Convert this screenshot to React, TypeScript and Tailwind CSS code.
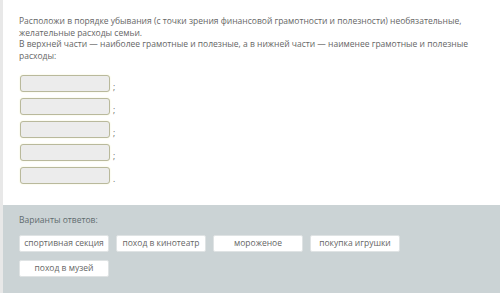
const slots = [";", ";", ";", ";", "."];

const options = [
  "спортивная секция",
  "поход в кинотеатр",
  "мороженое",
  "покупка игрушки",
  "поход в музей",
];

export default function App() {
  return (
    <div className="w-[500px] h-[293px] flex flex-col bg-white border-l-[3px] border-[#e8e8e8] font-['Open_Sans',sans-serif] text-[#666]">
      <div className="flex-1 bg-white pl-[16px] pr-3 pt-[15px]">
        <p className="text-[8.5px] leading-[11.5px]">
          Расположи в порядке убывания (с точки зрения финансовой грамотности и полезности) необязательные,
          желательные расходы семьи.
          <br />
          В верхней части — наиболее грамотные и полезные, а в нижней части — наименее грамотные и полезные
          расходы:
        </p>
        <div className="mt-[14px] flex flex-col gap-[6px] pl-px">
          {slots.map((s, i) => (
            <div key={i} className="flex items-end gap-[3px]">
              <div className="w-[90px] h-[17px] rounded-[3px] bg-[#ececec] border border-[#b9b99c] shadow-[0_0_2px_#f4f4d0]" />
              <span className="text-[8.5px] leading-[10px]">{s}</span>
            </div>
          ))}
        </div>
      </div>
      <div className="h-[88px] bg-[#cbd3d5] pl-[16px] pr-3 pt-[9px]">
        <p className="text-[8.5px] leading-[11px] text-[#5f6b6e]">Варианты ответов:</p>
        <div className="mt-[10px] flex flex-wrap gap-x-[7px] gap-y-[8px] w-[400px]">
          {options.map((o) => (
            <div
              key={o}
              className="w-[90px] h-[17px] flex items-center justify-center rounded-[2px] bg-white border border-[#dfe3e4] text-[8.5px] text-[#666] whitespace-nowrap"
            >
              {o}
            </div>
          ))}
        </div>
      </div>
    </div>
  );
}
